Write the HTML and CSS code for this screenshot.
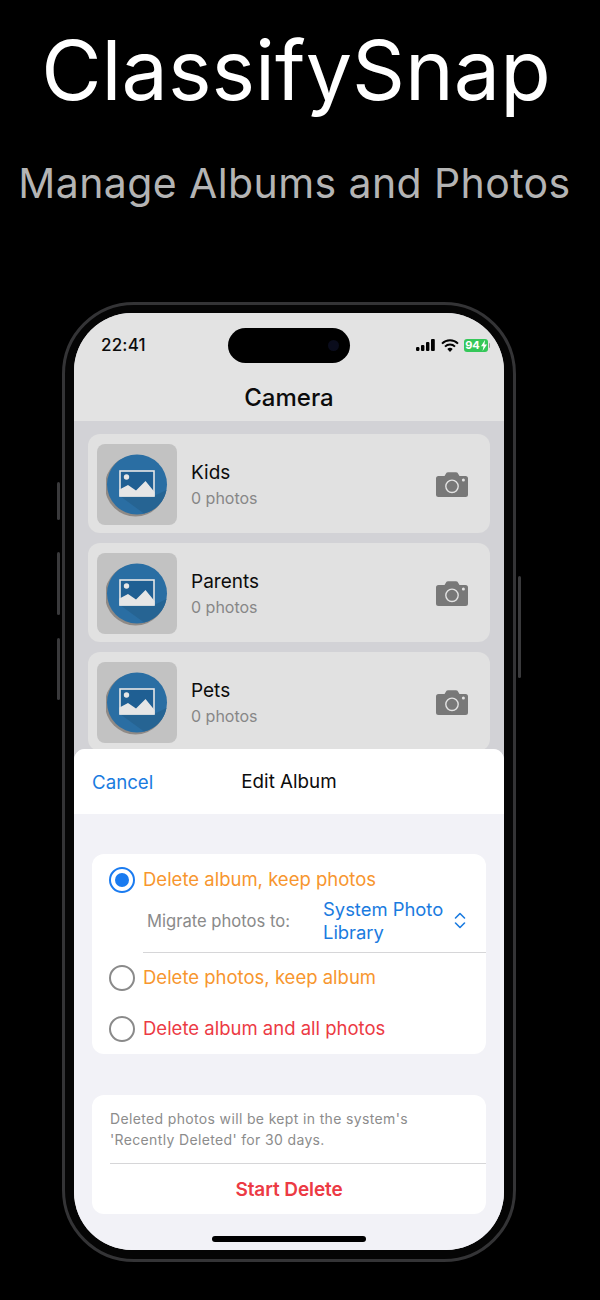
FILE: index.html
```html
<!DOCTYPE html>
<html lang="en">
<head>
<meta charset="utf-8">
<title>ClassifySnap</title>
<link rel="stylesheet" href="styles.css">
</head>
<body>
<svg class="defs" width="0" height="0" aria-hidden="true">
  <defs>
    <symbol id="thumb" viewBox="0 0 62 64">
      <circle cx="29.5" cy="33" r="30.5" fill="#8f8a86"/>
      <circle cx="31" cy="31.5" r="30" fill="#2a6ea3"/>
      <path d="M14 18 L48 18 L48 43 L60.5 37 A30 30 0 0 1 38 60.6 L14 43Z" fill="#266493"/>
      <rect x="14" y="18" width="34" height="25" fill="#1f5f93" stroke="#e6e6e6" stroke-width="1.6"/>
      <circle cx="20.5" cy="24" r="2.7" fill="#e6e6e6"/>
      <path d="M13.5 43.5 V36.5 L22 32 L30 37.5 L39.5 28 L48.5 39 V43.5Z" fill="#e6e6e6"/>
    </symbol>
    <symbol id="camera" viewBox="0 0 32 25">
      <path d="M2.5 4 H8.5 L10.5 .8 Q11 .2 12 .2 H20 Q21 .2 21.5 .8 L23.5 4 H29.5 Q32 4 32 6.5 V22.5 Q32 25 29.5 25 H2.5 Q0 25 0 22.5 V6.5 Q0 4 2.5 4Z" fill="#787878"/>
      <circle cx="16" cy="14.3" r="6.2" fill="none" stroke="#e3e3e3" stroke-width="1.4"/>
      <circle cx="27.4" cy="8" r="1.5" fill="#e3e3e3"/>
    </symbol>
  </defs>
</svg>
<main class="page">
  <h1 class="title">ClassifySnap</h1>
  <p class="subtitle">Manage Albums and Photos</p>
  <div class="phone">
    <span class="side-btn btn-a"></span>
    <span class="side-btn btn-b"></span>
    <span class="side-btn btn-c"></span>
    <span class="side-btn btn-d"></span>
    <div class="screen">
      <span class="island"><span class="lens"></span></span>
      <header class="app-head">
        <div class="status">
          <span class="time">22:41</span>
          <div class="status-icons">
            <svg class="signal" width="20" height="12" viewBox="0 0 20 12"><rect x="0" y="8" width="3.4" height="4" rx="1.2"/><rect x="5" y="6" width="3.4" height="6" rx="1"/><rect x="10" y="3" width="3.4" height="9" rx="1"/><rect x="15" y="0" width="3.8" height="12" rx="1"/></svg>
            <svg class="wifi" width="18" height="13" viewBox="0 0 18 13"><path d="M1 4.6 A11.5 11.5 0 0 1 17 4.6" fill="none" stroke="#000" stroke-width="2"/><path d="M4 7.6 A7.2 7.2 0 0 1 14 7.6" fill="none" stroke="#000" stroke-width="2"/><path d="M9 13 L6.3 10 A3.8 3.8 0 0 1 11.7 10Z"/></svg>
            <span class="battery">94<svg width="6" height="11" viewBox="0 0 6 11"><path d="M4 0 L0 6.2 H2.5 L1.6 11 L6 4.4 H3.4Z" fill="#fff"/></svg></span>
          </div>
        </div>
        <h2 class="app-title">Camera</h2>
      </header>
      <section class="albums">
        <article class="album">
          <div class="thumb"><svg width="62" height="64"><use href="#thumb"/></svg></div>
          <div class="album-text"><h3>Kids</h3><p>0 photos</p></div>
          <svg class="cam" width="32" height="25"><use href="#camera"/></svg>
        </article>
        <article class="album">
          <div class="thumb"><svg width="62" height="64"><use href="#thumb"/></svg></div>
          <div class="album-text"><h3>Parents</h3><p>0 photos</p></div>
          <svg class="cam" width="32" height="25"><use href="#camera"/></svg>
        </article>
        <article class="album">
          <div class="thumb"><svg width="62" height="64"><use href="#thumb"/></svg></div>
          <div class="album-text"><h3>Pets</h3><p>0 photos</p></div>
          <svg class="cam" width="32" height="25"><use href="#camera"/></svg>
        </article>
      </section>
      <section class="sheet">
        <header class="sheet-head">
          <span class="cancel">Cancel</span>
          <h2 class="sheet-title">Edit Album</h2>
        </header>
        <div class="sheet-body">
          <div class="card options">
            <div class="option">
              <span class="radio on"></span>
              <span class="opt-label orange">Delete album, keep photos</span>
            </div>
            <div class="migrate">
              <span class="migrate-label">Migrate photos to:</span>
              <span class="migrate-value">System Photo Library</span>
              <svg class="chevrons" width="12" height="17" viewBox="0 0 12 17"><path d="M1.5 6 L6 1.5 L10.5 6 M1.5 11 L6 15.5 L10.5 11" fill="none" stroke="#1a7be0" stroke-width="1.6" stroke-linecap="round" stroke-linejoin="round"/></svg>
            </div>
            <div class="option second">
              <span class="radio"></span>
              <span class="opt-label orange">Delete photos, keep album</span>
            </div>
            <div class="option third">
              <span class="radio"></span>
              <span class="opt-label red">Delete album and all photos</span>
            </div>
          </div>
          <div class="card confirm">
            <p class="note">Deleted photos will be kept in the system's 'Recently Deleted' for 30 days.</p>
            <div class="start">Start Delete</div>
          </div>
        </div>
        <span class="home-bar"></span>
      </section>
    </div>
  </div>
</main>
</body>
</html>
```
FILE: styles.css
```css
* { box-sizing: border-box; margin: 0; padding: 0; }
html, body { background: #000; }
body { width: 600px; height: 1300px; overflow: hidden; font-family: Inter, "Liberation Sans", sans-serif; }
.defs { position: absolute; }
.page { display: flex; flex-direction: column; height: 1300px; }
.title { color: #fff; font-size: 82.6px; font-weight: 400; line-height: 100px; height: 100px; margin-top: 20px; margin-left: -8px; text-align: center; }
.subtitle { color: #b4b4b4; font-size: 41px; line-height: 52px; margin-top: 37px; margin-left: -11px; text-align: center; letter-spacing: .4px; }
.phone { position: relative; flex: none; width: 454px; height: 960px; margin-top: 93px; margin-left: 62px; padding: 8px 9px; border-radius: 72px; background: #050505; border: 3px solid #343436; }
.side-btn { position: absolute; width: 3px; background: #3a3a3c; border-radius: 2px; }
.btn-a { left: -8px; top: 177px; height: 38px; }
.btn-b { left: -8px; top: 247px; height: 63px; }
.btn-c { left: -8px; top: 333px; height: 62px; }
.btn-d { right: -8px; top: 271px; height: 102px; }
.screen { position: relative; width: 430px; height: 937px; border-radius: 58px; overflow: hidden; background: #d2d2d6; display: flex; flex-direction: column; }
.island { position: absolute; left: 154px; top: 15px; width: 122px; height: 35px; border-radius: 18px; background: #000; }
.lens { position: absolute; right: 11px; top: 12px; width: 11px; height: 11px; border-radius: 50%; background: #0a0c1c; }
.app-head { height: 108px; background: #e3e3e3; flex: none; }
.status { display: flex; justify-content: space-between; align-items: center; padding: 20px 16px 0 27px; height: 44px; }
.time { font-size: 17px; font-weight: 500; line-height: 22px; color: #0c0c0c; letter-spacing: .2px; }
.status-icons { display: flex; align-items: center; gap: 5px; }
.wifi { fill: #000; }
.signal { fill: #000; }
.battery { position: relative; display: flex; align-items: center; justify-content: center; gap: 1px; width: 24px; height: 13px; border-radius: 3px; background: #35c759; color: #fff; font-size: 11px; font-weight: 700; line-height: 13px; }
.battery::after { content: ""; position: absolute; right: -2px; top: 4px; width: 1.5px; height: 5px; background: #9a9a9a; border-radius: 0 1px 1px 0; }
.app-title { font-size: 24px; font-weight: 500; line-height: 30px; margin-top: 26px; text-align: center; color: #0c0c0c; }
.albums { flex: none; display: flex; flex-direction: column; gap: 10px; padding: 13px 14px 0; height: 328px; }
.album { display: flex; align-items: center; height: 99px; padding: 2px 22px 0 9px; border-radius: 12px; background: #e1e1e1; flex: none; }
.thumb { display: flex; align-items: center; justify-content: center; width: 80px; height: 81px; background: #c2c2c2; border-radius: 8px; flex: none; }
.album-text { flex: 1; padding-left: 14px; }
.album-text h3 { font-size: 19px; font-weight: 400; line-height: 24px; color: #0c0c0c; }
.album-text p { font-size: 16px; line-height: 22px; margin-top: 2px; color: #878787; }
.sheet { position: relative; flex: 1; display: flex; flex-direction: column; border-radius: 11px 11px 0 0; background: #f2f2f7; overflow: hidden; z-index: 1; }
.sheet-head { position: relative; height: 65px; padding-top: 1px; background: #fff; display: flex; align-items: center; justify-content: center; flex: none; }
.cancel { position: absolute; left: 18px; top: 22px; font-size: 18.7px; line-height: 24px; color: #1a7be0; }
.sheet-title { font-size: 18.8px; font-weight: 400; line-height: 24px; color: #0c0c0c; }
.sheet-body { padding: 40px 18px 0; display: flex; flex-direction: column; gap: 41px; }
.card { background: #fff; border-radius: 12px; }
.options { height: 200px; padding: 13px 0 0 17px; }
.option { display: flex; align-items: center; gap: 8px; height: 26px; }
.option.second { margin-top: 12px; }
.option.third { margin-top: 25px; }
.radio { width: 26px; height: 26px; border-radius: 50%; border: 2.5px solid #8a8a8a; background: #fff; flex: none; position: relative; }
.radio.on { border-color: #1a7bf0; }
.radio.on::after { content: ""; position: absolute; left: 3.5px; top: 3.5px; width: 14px; height: 14px; border-radius: 50%; background: #1a7bf0; }
.opt-label { font-size: 18.5px; line-height: 24px; position: relative; top: -1px; }
.orange { color: #f7962e; }
.red { color: #ec3a44; }
.migrate { display: flex; align-items: center; height: 60px; margin-left: 34px; padding-left: 4px; padding-right: 20px; border-bottom: 1px solid #d6d6d8; }
.migrate-label { font-size: 16.6px; line-height: 22px; color: #8a8a8a; width: 176px; flex: none; position: relative; top: -2px; }
.migrate-value { font-size: 18.4px; line-height: 23px; color: #1a7be0; width: 130px; flex: none; position: relative; top: -2px; }
.chevrons { margin-left: auto; position: relative; top: -2px; }
.confirm { height: 119px; padding-left: 18px; }
.note { font-size: 14px; line-height: 20.5px; color: #8c8c8c; padding-top: 14px; height: 68px; width: 320px; letter-spacing: .35px; }
.start { border-top: 1px solid #d6d6d8; height: 51px; line-height: 51px; text-align: center; font-size: 19px; font-weight: 600; letter-spacing: -.1px; color: #ec3a44; padding-right: 18px; }
.home-bar { position: absolute; left: 138px; bottom: 8px; width: 154px; height: 6px; border-radius: 3px; background: #000; }
```
